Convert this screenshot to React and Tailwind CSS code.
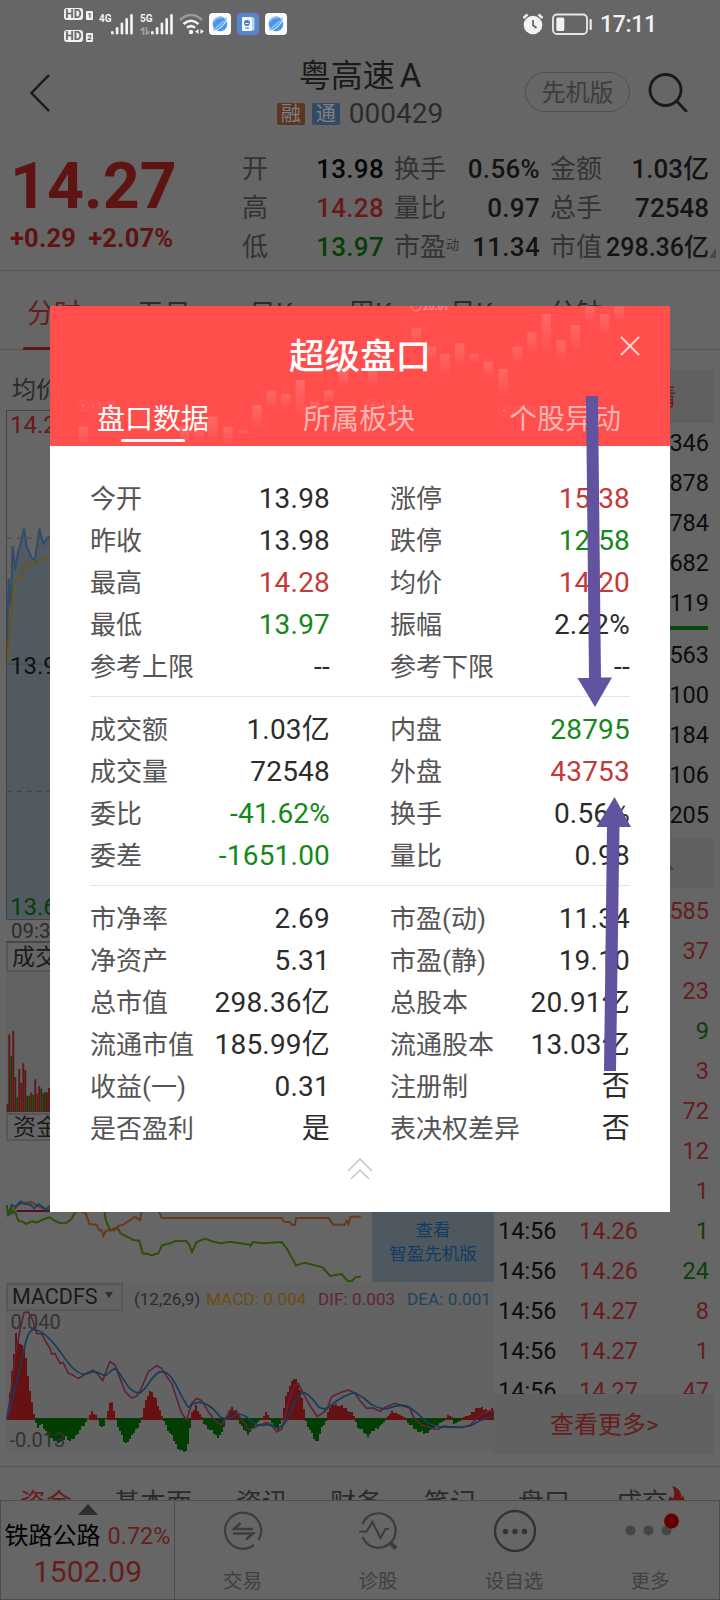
import React from 'react';

/* ---------- data ---------- */

const SUMMARY = [
  ['开', '13.98', 'text-[#060606]', '换手', '0.56%', '金额', '1.03亿'],
  ['高', '14.28', 'text-[#681919]', '量比', '0.97', '总手', '72548'],
  ['低', '13.97', 'text-[#063f06]', '市盈', '11.34', '市值', '298.36亿'],
];

const PERIODS = [
  ['分时', 'w-[110px]'],
  ['五日', 'w-[112px]'],
  ['日K', 'w-[99px]'],
  ['周K', 'w-[101px]'],
  ['月K', 'w-[100px]'],
  ['分钟', ''],
];

const ASKS = ['346', '878', '784', '682', '119'];
const BIDS = ['563', '100', '184', '106', '205'];
const R = 'text-[#681d1d]';
const G = 'text-[#0a400a]';
const TICKS = [
  ['14:56', '14.27', '585', R],
  ['14:56', '14.27', '37', R],
  ['14:56', '14.27', '23', R],
  ['14:56', '14.26', '9', G],
  ['14:56', '14.27', '3', R],
  ['14:56', '14.27', '72', R],
  ['14:56', '14.27', '12', R],
  ['14:56', '14.27', '1', R],
  ['14:56', '14.26', '1', G],
  ['14:56', '14.26', '24', G],
  ['14:56', '14.27', '8', R],
  ['14:56', '14.27', '1', R],
  ['14:56', '14.27', '47', R],
];

const RED = 'text-[#c33a38]';
const GREEN = 'text-[#14891a]';
const GROUPS = [
  [
    ['今开', '13.98', '', '涨停', '15.38', RED],
    ['昨收', '13.98', '', '跌停', '12.58', GREEN],
    ['最高', '14.28', RED, '均价', '14.20', RED],
    ['最低', '13.97', GREEN, '振幅', '2.22%', ''],
    ['参考上限', '--', '', '参考下限', '--', ''],
  ],
  [
    ['成交额', '1.03亿', '', '内盘', '28795', GREEN],
    ['成交量', '72548', '', '外盘', '43753', RED],
    ['委比', '-41.62%', GREEN, '换手', '0.56%', ''],
    ['委差', '-1651.00', GREEN, '量比', '0.98', ''],
  ],
  [
    ['市净率', '2.69', '', '市盈(动)', '11.34', ''],
    ['净资产', '5.31', '', '市盈(静)', '19.10', ''],
    ['总市值', '298.36亿', '', '总股本', '20.91亿', ''],
    ['流通市值', '185.99亿', '', '流通股本', '13.03亿', ''],
    ['收益(一)', '0.31', '', '注册制', '否', ''],
    ['是否盈利', '是', '', '表决权差异', '否', ''],
  ],
];

const HIST = [
  [20, 0], [30, 110], [45, 255], [55, 225], [72, 205], [80, 140], [90, 60], [102, 0],
  [108, -25], [120, -15], [150, -60], [160, -65], [185, -70], [192, -50], [210, -68], [235, -35], [260, -3],
  [264, 8], [275, 20], [285, 12], [292, 0], [294, -15], [305, -30], [315, 0], [318, 18], [330, 58], [344, 6],
  [348, -10], [372, -75], [390, -55], [422, -3], [426, 25], [445, 85], [465, 60], [484, 6],
  [487, 0], [492, -15], [510, -45], [530, -85], [548, -100], [556, -98], [566, -40], [570, 10], [585, 38], [603, 4],
  [608, -12], [625, -30], [650, -52], [665, -40], [673, 0], [680, 15], [692, 32], [710, 20], [714, 3],
  [718, -20], [742, -45], [772, -6], [784, 2], [795, 18], [806, 3], [810, -12], [830, -30], [842, -2],
  [848, 20], [850, 50], [865, 95], [882, 125], [895, 95], [910, 25], [914, -2], [930, -40], [947, -72], [965, -20], [978, -2],
  [981, 25], [1000, 45], [1030, 35], [1055, 15], [1062, 2], [1068, -20], [1100, -50], [1130, -25], [1156, -2],
  [1160, 8], [1175, 20], [1210, 6], [1217, 2], [1220, -10], [1250, -35], [1275, -43], [1310, -15], [1332, -2],
  [1335, 3], [1342, 12], [1354, 3], [1358, -14], [1375, -8], [1382, 0], [1388, 5], [1410, 12], [1430, 35], [1460, 26], [1484, 30],
];

function histogram() {
  const bars = [];
  let k = 0;
  for (let x = 21, i = 0; x < 1480; x += 6, i++) {
    while (k < HIST.length - 2 && HIST[k + 1][0] < x) k++;
    const [x0, v0] = HIST[k];
    const [x1, v1] = HIST[k + 1];
    const t = (x - x0) / (x1 - x0);
    let v = v0 + (v1 - v0) * t;
    if (Math.abs(v) > 14) v += ((i * 7) % 5) * 2 - 4;
    bars.push([x, v]);
  }
  return bars;
}
const BARS = histogram();

const VOLUME = [
  [20, 1322, 1], [25, 1175, 1], [31, 1220, 0], [37, 1168, 1], [43, 1265, 1], [49, 1308, 0], [55, 1248, 1],
  [61, 1278, 1], [67, 1236, 1], [73, 1250, 1], [79, 1305, 0], [85, 1305, 0], [91, 1298, 1], [97, 1303, 0],
  [103, 1270, 1], [109, 1300, 1], [115, 1284, 1], [121, 1290, 0], [127, 1300, 1], [132, 1297, 0], [138, 1298, 1], [144, 1288, 1],
];

const CANDLES = [
  [235, 500, 50], [540, 500, 50], [583, 490, 60], [625, 470, 75], [670, 500, 50], [715, 512, 10], [757, 435, 70],
  [800, 392, 50], [843, 402, 38], [887, 360, 100], [930, 425, 20], [973, 392, 35], [1016, 330, 50], [1104, 320, 60],
  [1235, 205, 45], [1280, 260, 40], [1321, 282, 60], [1365, 250, 65], [1408, 282, 25], [1451, 305, 45], [1495, 327, 70],
  [1538, 260, 45], [1582, 217, 60], [1625, 162, 110], [1669, 240, 60], [1712, 195, 70], [1756, 140, 45], [1800, 162, 60],
  [1843, 140, 40],
];

/* ---------- status bar ---------- */

function Planet() {
  return (
    <svg viewBox="0 0 22 22" className="h-[22px] w-[22px]">
      <rect width="22" height="22" rx="4" fill="#fbfcfe" />
      <circle cx="11" cy="11" r="7.3" fill="#4b95ea" />
      <path d="M5 8.500A7 7 0 0 1 13 4.500" stroke="#8cc0f8" strokeWidth="2" fill="none" />
      <path d="M3.500 18.500Q5 14.500 10 11T18.500 3.500Q18 8 13 12T3.500 18.500Z" fill="#7db5f5" />
      <path d="M3.300 18.500Q9 17.500 14 12.500T18.700 3.500" stroke="#fff" strokeWidth="0.900" fill="none" />
    </svg>
  );
}

function Signal() {
  return (
    <svg viewBox="0 0 22 21" className="h-[21px] w-[22px]" fill="#f2f2f2">
      <rect x="0" y="17" width="2.600" height="3.500" rx="1.200" />
      <rect x="4.800" y="13" width="2.600" height="7.500" rx="1.200" />
      <rect x="9.600" y="8.500" width="2.600" height="12" rx="1.200" />
      <rect x="14.400" y="4" width="2.600" height="16.500" rx="1.200" />
      <rect x="19.200" y="0" width="2.600" height="20.500" rx="1.200" />
    </svg>
  );
}

function HdBadge({ n }) {
  return (
    <div className="flex items-end gap-[3px]">
      <span className="flex h-[12px] w-[19px] items-center justify-center rounded-[3px] bg-[#f2f2f2] text-[12px] font-bold leading-[12px] text-[#666]">HD</span>
      <span className="flex h-[9px] w-[7px] items-center justify-center rounded-[1px] bg-[#f2f2f2] text-[8px] font-bold leading-[9px] text-[#555]">{n}</span>
    </div>
  );
}

function StatusBar() {
  return (
    <div className="flex h-12 items-start pl-[64px] text-[#f2f2f2]">
      <div className="flex flex-col gap-[10px] pt-[8px]">
        <HdBadge n="1" />
        <HdBadge n="2" />
      </div>
      <div className="ml-[6px] w-[12px] whitespace-nowrap pt-[13px] text-[10px] font-bold leading-[11px]">4G</div>
      <div className="pt-[14px]"><Signal /></div>
      <div className="ml-[7px] w-[11px] whitespace-nowrap pt-[13px] text-[10px] font-bold leading-[11px]">
        5G
        <svg viewBox="0 0 10 8" className="mt-[3px] h-[8px] w-[10px]" fill="none" stroke="#a0a0a0" strokeWidth="1.800">
          <path d="M0.500 3.500L3.500 1V8M6.500 0V7L9.500 4.500" />
        </svg>
      </div>
      <div className="pt-[14px]"><Signal /></div>
      <svg viewBox="0 0 25 22" className="ml-[6px] mt-[13px] h-[22px] w-[25px]" fill="none" stroke="#f2f2f2" strokeWidth="2.600">
        <path d="M1 7Q12 -3 23 7" stroke="#9a9a9a" />
        <path d="M4.500 11Q12 4.500 19.500 11" />
        <path d="M8 14.800Q12 11.500 16 14.800" />
        <circle cx="12" cy="19" r="2.200" fill="#f2f2f2" stroke="none" />
        <path d="M16 18.500L19.500 16V21ZM25 18.500L21.500 16V21Z" fill="#f2f2f2" stroke="none" />
      </svg>
      <div className="ml-[5px] mt-[13px] flex gap-[6px]">
        <Planet />
        <svg viewBox="0 0 22 22" className="h-[22px] w-[22px]">
          <rect width="22" height="22" rx="4" fill="#5487cf" />
          <rect x="12" y="4.500" width="5.500" height="13" rx="1" fill="#b9d0f0" />
          <rect x="5" y="4" width="10" height="14" rx="1" fill="#f5f8fd" />
          <circle cx="10" cy="10" r="3" fill="#4a7cc4" />
          <path d="M8.300 10.500h3.400" stroke="#f5f8fd" />
          <path d="M8 15h4" stroke="#4a7cc4" />
        </svg>
        <Planet />
      </div>
      <svg viewBox="0 0 22 22" className="ml-[235px] mt-[13px] h-[22px] w-[22px]" fill="#f2f2f2">
        <circle cx="11" cy="12" r="9.300" />
        <path d="M1.500 5L5.500 1.500M20.500 5L16.500 1.500" stroke="#f2f2f2" strokeWidth="2.400" />
        <path d="M11 7V12.300L14.500 15" stroke="#666" strokeWidth="1.800" fill="none" />
      </svg>
      <svg viewBox="0 0 41 22" className="ml-[8px] mt-[13px] h-[22px] w-[41px]">
        <rect x="1" y="1.500" width="34" height="19.500" rx="4" fill="none" stroke="#e8e8e8" strokeWidth="1.800" />
        <rect x="4.300" y="4.500" width="8" height="13.500" rx="1.500" fill="#f2f2f2" />
        <rect x="37.500" y="6" width="2.300" height="11" rx="1" fill="#e8e8e8" />
      </svg>
      <div className="ml-[7px] pt-[11px] text-[23px] font-medium leading-[28px] tracking-[-0.300px]">17:11</div>
    </div>
  );
}

/* ---------- page header ---------- */

function Header() {
  return (
    <div className="flex h-[92px] items-start">
      <svg viewBox="0 0 20 38" className="ml-[30px] mt-[26px] h-[38px] w-[20px]" fill="none" stroke="#1a1a1a" strokeWidth="2.400">
        <path d="M19 1L1.500 19L19 37" />
      </svg>
      <div className="ml-[235px] flex w-[150px] flex-col items-center">
        <div className="mt-[8px] flex whitespace-nowrap text-[32px] leading-[40px] text-[#1a1a1a]">
          粤高速<span className="ml-[5px] text-[33px]">A</span>
        </div>
        <div className="flex items-center gap-[7px] whitespace-nowrap">
          <span className="h-[22px] w-[28px] rounded-[2px] bg-[#593722] text-center text-[20px] leading-[22px] text-[#808080]">融</span>
          <span className="h-[22px] w-[28px] rounded-[2px] bg-[#304a68] text-center text-[20px] leading-[22px] text-[#808080]">通</span>
          <span className="ml-[2px] text-[28px] leading-[36px] text-[#2b2b2b]">000429</span>
        </div>
      </div>
      <div className="ml-auto mr-[32px] flex items-center gap-[18px] pt-[24px]">
        <div className="flex h-[40px] w-[105px] items-center justify-center rounded-full border border-[#505050] pt-[2px] text-[24px] leading-[36px] text-[#3d3d3d]">先机版</div>
        <svg viewBox="0 0 40 40" className="h-[40px] w-[40px]" fill="none" stroke="#1a1a1a" strokeWidth="2.800">
          <circle cx="17.500" cy="18" r="15.500" />
          <path d="M28.500 29L39 40" />
        </svg>
      </div>
    </div>
  );
}

function Summary() {
  return (
    <div className="flex h-[130px] pt-[10px]">
      <div className="w-[242px] shrink-0 pl-[10px] text-[#5f1414]">
        <div className="mt-[4px] text-[64.500px] font-bold leading-[64px]">14.27</div>
        <div className="mt-[2px] flex gap-[12px] whitespace-nowrap text-[25.500px] font-bold leading-[36px] tracking-[0.200px]">
          <span>+0.29</span><span>+2.07%</span>
        </div>
      </div>
      <div className="flex flex-col text-[26px] leading-[39px] text-[#333]">
        {SUMMARY.map((r, i) => (
          <div key={i} className="flex whitespace-nowrap">
            <span className="w-[41px]">{r[0]}</span>
            <span className={`w-[101px] text-right font-medium tracking-[0.300px] ${r[2]}`}>{r[1]}</span>
            <span className="ml-[10px] flex w-[66px]">
              {r[3]}
              {i === 2 && <span className="text-[13px] leading-[34px]">动</span>}
            </span>
            <span className="w-[80px] text-right font-medium tracking-[0.300px] text-[#141414]">{r[4]}</span>
            <span className="ml-[10px] w-[52px]">{r[5]}</span>
            <span className="w-[107px] text-right font-medium text-[#141414]">
              <span className={i === 2 ? 'text-[25px]' : ''}>{r[6]}</span>
            </span>
          </div>
        ))}
      </div>
      <svg viewBox="0 0 10 10" className="mb-[12px] h-[10px] w-[10px] self-end" fill="#4a4a4a"><path d="M0 10L7 0V10Z" /></svg>
    </div>
  );
}

/* ---------- left column charts ---------- */

function PriceChart() {
  return (
    <div className="h-[574px]">
      <div className="h-[60px] pl-[12px] text-[24px] leading-[80px] text-[#2b2b2b]">均价</div>
      <svg viewBox="0 410 494 514" className="h-[514px] w-[494px]">
        <g transform="translate(0 480) scale(.33333 .4719)" fill="none" strokeWidth="2">
          <path d="M20 390L26 210L32 270L38 140L46 190L55 150L62 135L72 103L80 140L95 165L105 170L118 103L130 135L142 122L150 120V930H20Z" fill="#505a60" />
          <path d="M20 390H150" stroke="#454545" strokeWidth="1" vectorEffect="non-scaling-stroke" />
          <path d="M20 123H150M20 660H150" stroke="#434343" strokeWidth="1" strokeDasharray="5 5" vectorEffect="non-scaling-stroke" />
          <path d="M20 380L26 210L32 270L38 140L46 190L55 150L62 135L72 103L80 140L95 165L105 170L118 103L130 135L142 122L150 120" stroke="#2f4d6c" vectorEffect="non-scaling-stroke" />
          <path d="M21 390L32 290L40 225L50 210L62 205L75 180L100 178L120 170L150 165" stroke="#6b5518" vectorEffect="non-scaling-stroke" />
        </g>
        <path d="M494 410.500H6.500V919.500H494" fill="none" stroke="#434343" />
        <g fontSize="24">
          <text x="10" y="433" fill="#681919">14.28</text>
          <text x="10" y="673.500" fill="#111">13.98</text>
          <text x="10" y="914.500" fill="#073f07">13.68</text>
        </g>
      </svg>
    </div>
  );
}

function LeftColumn() {
  return (
    <div className="flex w-[494px] shrink-0 flex-col">
      <PriceChart />
      <div className="ml-[6px] h-[19px] border-b-2 border-[#474747] pl-[5px] text-[20.500px] leading-[15px] text-[#2b2b2b]">09:30</div>
      <div className="ml-[6px] h-[29px] w-[100px] border-2 border-t-0 border-[#565656] pl-[4px] text-[23px] leading-[30px] text-[#1a1a1a]">成交量</div>
      <svg viewBox="0 972 494 141" className="h-[141px] w-[494px]">
        <rect x="6" y="972" width="488" height="141" fill="#626262" />
        {VOLUME.map(([x, y, up]) => {
          const top = 480 + y * 0.4719;
          return <rect key={x} x={x / 3} y={top} width="1.900" height={1112 - top} fill={up ? '#5e1818' : '#1f3d06'} />;
        })}
      </svg>
      <div className="ml-[6px] h-[28px] w-[100px] border-2 border-[#565656] pl-[5px] text-[23px] leading-[25px] text-[#1a1a1a]">资金流</div>
      <div className="flex h-[141px]">
        <svg viewBox="0 1141 372 141" className="h-[141px] w-[372px]">
          <g transform="translate(0 1190) scale(.33333)" fill="none" strokeWidth="6">
            <path d="M50 63H150" stroke="#5c0d1d" />
            <path d="M20 70L35 66L55 44L75 38L95 36L110 46L130 56L150 58" stroke="#683a1c" />
            <path d="M20 72L28 74L35 45L45 50L55 42L62 34L75 42L92 44L102 55L115 42L128 50L138 60L150 46" stroke="#12456b" />
            <path d="M20 45L24 72L32 55L36 70L46 66L55 92L70 96L78 102L95 94L110 97L135 86L150 82L160 90L178 99L200 98L214 88L222 72L235 60M312 60L318 92L330 120L352 113L362 130L400 150L418 152L428 190L446 192L452 196L475 190L486 166L510 160L525 154L558 152L568 165L576 186L590 156L615 146L640 155L662 160L690 155L750 164L752 168L758 156L790 160L845 156L860 175L888 226L915 218L968 232L990 258L1025 252L1044 274L1055 274L1066 262L1082 260" stroke="#2d4f06" />
            <path d="M240 62L258 72L268 102L290 104L298 122L305 120L310 138L318 122L345 120L355 108L370 104L405 80L420 90L425 62M475 62L486 84L845 84L853 96L870 96L876 105L885 105L888 84L986 84L1000 104L1034 104L1040 92L1045 102L1052 80L1082 80" stroke="#683a1c" />
          </g>
        </svg>
        <div className="flex flex-1 flex-col justify-end bg-[#50585f] pb-[16px] text-center text-[17.500px] leading-[24px] text-[#123b63]">
          <span>查看</span>
          <span>智盈先机版</span>
        </div>
      </div>
      <div className="ml-[6px] flex h-[29px] items-center whitespace-nowrap bg-[#636363] text-[17px]">
        <div className="flex h-[28px] w-[117px] items-center border-2 border-[#575757] pl-[4px] text-[21.500px] leading-[26px] text-[#1a1a1a]">
          MACDFS
          <svg viewBox="0 0 8 6" className="mb-[3px] ml-[7px] h-[6px] w-[8px]" fill="#2f2f2f"><path d="M0 0H8L4 6Z" /></svg>
        </div>
        <span className="ml-[11px] mt-[7px] w-[72px] text-[#2b2b2b]">(12,26,9)</span>
        <span className="mt-[7px] w-[112px] tracking-[0.100px] text-[#6a4d14]">MACD: 0.004</span>
        <span className="mt-[7px] w-[89px] tracking-[0.100px] text-[#5e2339]">DIF: 0.003</span>
        <span className="mt-[7px] tracking-[0.100px] text-[#1a4560]">DEA: 0.001</span>
      </div>
      <svg viewBox="0 1311 494 141" className="h-[141px] w-[494px]">
        <rect x="6" y="1311" width="488" height="141" fill="#636363" />
        <g transform="translate(0 1190) scale(.33333)" fill="none" strokeWidth="5" strokeLinejoin="round">
          {BARS.map(([x, v]) => (
            <rect key={x} x={x} y={v > 0 ? 690 - v - 4 : 684} width="6" height={Math.abs(v) + 4} fill={v > 0 ? '#661212' : '#023e02'} shapeRendering="crispEdges" />
          ))}
          <path d="M20 688L28 640L45 500L60 420L72 368L85 366L98 390L110 430L125 432L140 460L150 475L155 492L165 490L180 520L190 518L205 550L220 556L235 566L250 556L262 548L280 540L295 555L308 572L318 545L330 514L345 525L360 565L375 605L395 624L410 618L422 600L445 545L470 527L485 535L500 560L515 580L530 625L545 670L560 690L575 640L590 625L605 632L625 665L640 685L655 700L665 705L680 680L690 660L710 665L725 690L735 700L745 718L760 714L780 705L800 698L815 705L830 726L845 718L855 680L870 620L885 585L895 580L905 600L920 630L935 655L952 680L970 668L982 655L995 620L1020 608L1045 600L1065 610L1080 632L1100 655L1120 654L1140 664L1160 650L1185 640L1210 648L1230 655L1240 680L1265 705L1295 715L1315 718L1330 708L1360 712L1390 712L1410 705L1425 690L1445 672L1465 664L1482 662" stroke="#5e2339" />
          <path d="M20 688C32 670 45 590 60 530S80 425 98 420S140 435 165 465S215 545 250 553C265 553 275 545 285 545S305 556 315 556S335 536 345 536C360 542 375 585 395 600Q410 610 420 608C440 600 460 545 485 545C520 545 535 610 555 635Q562 652 568 652Q575 638 600 637Q630 640 660 680Q680 695 710 672Q735 672 750 690Q768 708 790 706Q805 700 825 712Q850 720 870 670Q895 605 915 608Q935 620 955 650Q975 665 995 645Q1030 615 1065 608Q1090 620 1110 640Q1140 660 1165 655Q1200 640 1225 650C1250 660 1275 705 1315 710Q1370 714 1410 708Q1450 685 1482 678" stroke="#153c5c" />
        </g>
        <g fontSize="20" fill="#333">
          <text x="10.500" y="1329">0.040</text>
          <text x="9.500" y="1447">-0.013</text>
        </g>
      </svg>
    </div>
  );
}

/* ---------- right column ---------- */

function RightColumn() {
  return (
    <div className="mt-[20px] flex w-[220px] flex-col text-[24px] text-[#0d0d0d]">
      <div className="flex h-[53px] items-center justify-end bg-[#606060] pr-[38px] text-[24px] text-[#681d1d]">行情</div>
      <div className="pr-[5px] text-right text-[23.500px] leading-[40px]">
        {ASKS.map((v) => <div key={v}>{v}</div>)}
      </div>
      <div className="mb-[5px] mr-[6px] mt-[3px] h-[4px] bg-[#074707]" />
      <div className="pr-[5px] text-right text-[23.500px] leading-[40px]">
        {BIDS.map((v) => <div key={v}>{v}</div>)}
      </div>
      <div className="mt-[3px] flex h-[50px] items-center bg-[#606060] pl-[168px]">
        <svg viewBox="0 0 12 8" className="mt-[6px] h-[8px] w-[12px]" fill="none" stroke="#3f3f3f" strokeWidth="2"><path d="M1 1L5 1L11 8" /></svg>
      </div>
      <div className="mt-[3px] h-[503px] overflow-hidden text-[23.500px] leading-[40px]">
        {TICKS.map(([t, p, q, c], i) => (
          <div key={i} className="flex pl-[4px] pr-[5px]">
            <span className="w-[81px]">{t}</span>
            <span className="w-[60px] text-[#681d1d]">{p}</span>
            <span className={`flex-1 text-right ${c}`}>{q}</span>
          </div>
        ))}
      </div>
      <div className="h-[60px] bg-[#616161] pl-[56px] text-[24px] leading-[63px] text-[#681d1d]">查看更多&gt;</div>
    </div>
  );
}

/* ---------- bottom ---------- */

function SectionTabs() {
  return (
    <div className="flex h-[33px] overflow-hidden whitespace-nowrap pl-[20px] text-[26px] leading-[73px] text-[#2b2b2b]">
      <span className="w-[94px] text-[#681d1d]">资金</span>
      <span className="w-[122px]">基本面</span>
      <span className="w-[94px]">资讯</span>
      <span className="w-[94px]">财务</span>
      <span className="w-[94px]">笔记</span>
      <span className="w-[98px]">盘口</span>
      <span className="w-[54px]">成交</span>
      <svg viewBox="0 0 19 24" className="ml-[-4px] mt-[19px] h-[24px] w-[19px]" fill="#6b1512">
        <path d="M6 0C13 2 16 7 15 12Q17 11 17 9Q20 17 18 24H0Q0 15 5 10Q5 13 7 12Q10 7 6 0Z" />
      </svg>
    </div>
  );
}

function NavItem({ label, width, children }) {
  return (
    <div className={`flex flex-col items-center ${width}`}>
      <div className="flex h-[60px] items-center">{children}</div>
      <span className="mt-[8px] text-[19.500px] leading-[26px] text-[#404040]">{label}</span>
    </div>
  );
}

function BottomBar() {
  return (
    <div className="flex h-[100px] border border-[#4c4c4c]">
      <div className="flex w-[174px] flex-col items-center border-r border-[#4c4c4c]">
        <svg viewBox="0 0 20 11" className="mt-[3px] h-[11px] w-[20px]" fill="#2e2e2e"><path d="M10 0L20 11H0Z" /></svg>
        <div className="mt-[3px] flex gap-[7px] whitespace-nowrap text-[24px] leading-[36px] text-black">
          铁路公路<span className="text-[23.500px] text-[#681d1d]">0.72%</span>
        </div>
        <div className="mt-[-1px] text-[30px] leading-[38px] text-[#681d1d]">1502.09</div>
      </div>
      <NavItem label="交易" width="w-[135px]">
        <svg viewBox="0 0 40 40" className="h-[40px] w-[40px]" fill="none" stroke="#3d3d3d" strokeWidth="2.200">
          <path d="M35.500 29A18 18 0 1 0 31 34" />
          <path d="M17.500 12L11 18H30M10 22.500H30L23 28.500" strokeWidth="2.500" />
        </svg>
      </NavItem>
      <NavItem label="诊股" width="w-[136px]">
        <svg viewBox="0 0 40 40" className="h-[40px] w-[40px]" fill="none" stroke="#3d3d3d" strokeWidth="2.200">
          <path d="M4.500 13A17.200 17.200 0 1 1 4.500 26" />
          <path d="M1 20.500H8.500L14.500 11L22.500 27L27.500 18H31" />
          <path d="M31.500 31L38 37.500" strokeWidth="4" />
        </svg>
      </NavItem>
      <NavItem label="设自选" width="w-[136px]">
        <svg viewBox="0 0 44 44" className="ml-[2px] h-[44px] w-[44px]" fill="none" stroke="#333" strokeWidth="2.400">
          <circle cx="22" cy="22" r="20" />
          <g fill="#333" stroke="none"><circle cx="12.500" cy="22.500" r="2.700" /><circle cx="22" cy="22.500" r="2.700" /><circle cx="31.500" cy="22.500" r="2.700" /></g>
        </svg>
      </NavItem>
      <NavItem label="更多" width="w-[136px]">
        <svg viewBox="0 0 54 40" className="ml-[3px] h-[40px] w-[54px]" fill="#464646">
          <circle cx="5.500" cy="19.500" r="5" /><circle cx="23.500" cy="19.500" r="5" /><circle cx="41.500" cy="19.500" r="5" />
          <circle cx="46.500" cy="10" r="7.400" fill="#660000" />
        </svg>
      </NavItem>
    </div>
  );
}

/* ---------- dialog ---------- */

function DialogHeader() {
  return (
    <div className="relative h-[140px] overflow-hidden rounded-t-[4px] bg-[#ff4e4c]">
      <svg viewBox="50 306 620 140" className="absolute inset-0 h-[140px] w-[620px]">
        <defs>
          <linearGradient id="candle" x1="0" y1="0" x2="0" y2="1">
            <stop offset="0" stopColor="#fff" stopOpacity=".15" />
            <stop offset="1" stopColor="#fff" stopOpacity=".02" />
          </linearGradient>
        </defs>
        <g transform="translate(0 260) scale(.33333)">
          {CANDLES.map(([x, y, h]) => <rect key={x} x={x} y={y} width="28" height={h} fill="url(#candle)" />)}
        </g>
        <g fill="#fff" fillOpacity=".1" fontSize="10" fontWeight="700">
          <text x="90" y="409">18.07</text>
          <text x="380" y="408">18.75</text>
          <text x="511" y="414">23.81</text>
          <text x="423" y="310" fillOpacity=".4">20.01</text>
        </g>
        <g fill="none" stroke="#fff" strokeOpacity=".1">
          <circle cx="83" cy="405.500" r="5.500" /><circle cx="373" cy="404" r="5.500" /><circle cx="504" cy="410" r="5.500" />
          <circle cx="416" cy="306" r="5" strokeOpacity=".4" />
        </g>
        <g fill="#fff" fillOpacity=".12">
          <path d="M80 404H86L83 408ZM370 406H376L373 402ZM501 412H507L504 408Z" />
        </g>
      </svg>
      <div className="relative flex h-full flex-col">
        <div className="flex h-[92px] items-center justify-center pt-[6px] text-[35.500px] font-medium leading-[50px] text-white">
          <span className="ml-[109px] mt-[4px] flex-1 text-center">超级盘口</span>
          <svg viewBox="0 0 20 20" className="mb-[19px] ml-[59px] mr-[30px] h-[20px] w-[20px]" stroke="#ffd2d1" strokeWidth="2"><path d="M1 1L19 19M19 1L1 19" /></svg>
        </div>
        <div className="flex justify-between pl-[47px] pr-[49px] text-[28px] leading-[44px] text-[#ffb5b3]">
          <span className="flex flex-col items-center text-white">
            盘口数据
            <span className="mt-[-3px] h-[3px] w-[64px] rounded-full bg-white" />
          </span>
          <span>所属板块</span>
          <span>个股异动</span>
        </div>
      </div>
    </div>
  );
}

function Pair({ label, value, color }) {
  return (
    <div className="flex w-[240px] justify-between whitespace-nowrap">
      <span className="text-[26px] text-[#555]">{label}</span>
      <span className={`text-[28px] tracking-[0.200px] ${color || 'text-[#2c2c2c]'}`}>{value}</span>
    </div>
  );
}

function Dialog() {
  return (
    <div className="absolute left-[50px] top-[306px] h-[906px] w-[620px] rounded-t-[4px] bg-white">
      <DialogHeader />
      <div className="px-[40px] pt-[32px]">
        {GROUPS.map((rows, g) => (
          <div key={g} className={g > 0 ? 'mt-[8px] border-t border-[#e6e6e6] pt-[12px]' : ''}>
            {rows.map((r) => (
              <div key={r[0]} className="flex h-[42px] justify-between leading-[42px]">
                <Pair label={r[0]} value={r[1]} color={r[2]} />
                <Pair label={r[3]} value={r[4]} color={r[5]} />
              </div>
            ))}
          </div>
        ))}
      </div>
      <svg viewBox="0 0 26 22" className="mx-auto mt-[8px] h-[22px] w-[26px]" fill="none" stroke="#c4c4c4" strokeWidth="1.500">
        <path d="M1 13L13 1L25 13M4 21L13 12L22 21" />
      </svg>
    </div>
  );
}

function Arrows() {
  return (
    <svg viewBox="570 390 70 690" className="absolute left-[570px] top-[390px] h-[690px] w-[70px]" fill="#6153a0">
      <path d="M586 396H598L601 677.500H612L595 707L577.500 678H589Z" />
      <path d="M614.500 797L631 827H619.500L616 1071H604L607 827H596.500Z" />
    </svg>
  );
}

export default function App() {
  return (
    <div className="relative h-[1600px] w-[720px] overflow-hidden bg-[#666] font-[Roboto,'Noto_Sans_CJK_SC',sans-serif]">
      <StatusBar />
      <Header />
      <Summary />
      <div className="flex h-[80px] border-y border-[#555] pl-[27px] text-[27px] leading-[87px] text-[#2b2b2b]">
        {PERIODS.map(([p, w], i) => (
          <span key={p} className={`${w} ${i === 0 ? 'text-[#681d1d]' : ''}`}>
            {p}
            {i === 0 && <span className="ml-[-4px] mt-[-11px] block h-[3px] w-[64px] rounded-t-[2px] bg-[#631414]" />}
          </span>
        ))}
      </div>
      <div className="flex h-[1116px]">
        <LeftColumn />
        <RightColumn />
      </div>
      <div className="h-px bg-[#555]" />
      <SectionTabs />
      <BottomBar />
      <Dialog />
      <Arrows />
    </div>
  );
}
